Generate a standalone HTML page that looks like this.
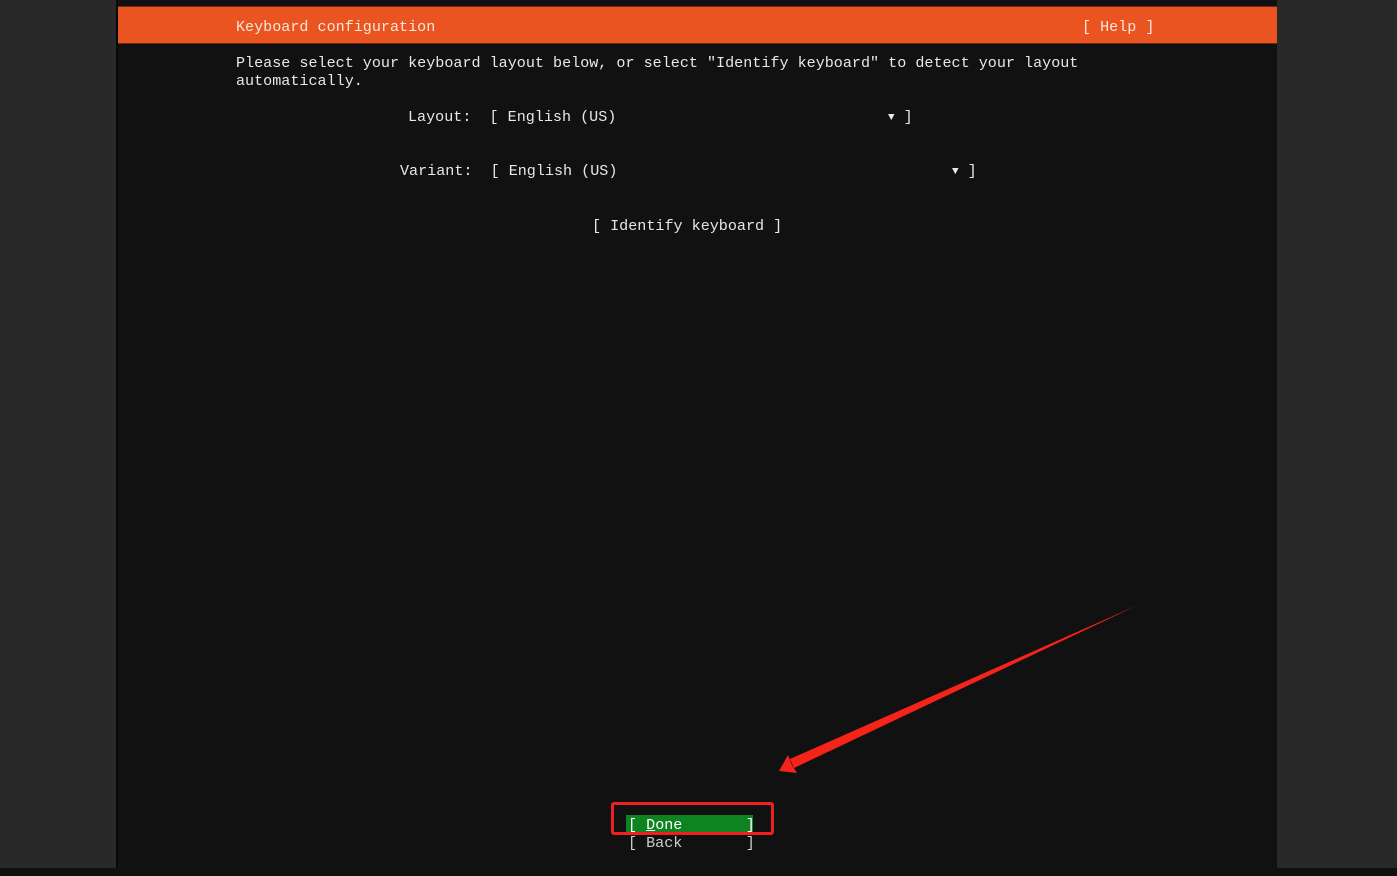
<!DOCTYPE html>
<html><head><style>
body{margin:0;width:1397px;height:876px;background:#111;position:relative;overflow:hidden;font-family:"Liberation Mono","DejaVu Sans Mono",monospace;font-size:15.1px;color:#e8e8e8}
.t{position:absolute;white-space:pre;line-height:18px}
.a{font-size:11px;vertical-align:1px}
</style></head><body>
<div style="position:absolute;left:0;top:0;width:116px;height:868px;background:#292929"></div>
<div style="position:absolute;left:116px;top:0;width:2px;height:868px;background:#080808"></div>
<div style="position:absolute;left:1277px;top:0;width:120px;height:868px;background:#292929"></div>
<div style="position:absolute;left:0;top:868px;width:1397px;height:8px;background:#111"></div>
<div style="position:absolute;left:118px;top:6px;width:1159px;height:38px;background:#e95420;border-top:1px solid #6a2a14;border-bottom:1px solid #6a2a14;box-sizing:border-box"></div>
<div class="t" style="left:236px;top:18px;color:#fbe6dc">Keyboard configuration</div>
<div class="t" style="left:1082px;top:18px;color:#fbe6dc">[ Help ]</div>
<div class="t" style="left:236px;top:54px">Please select your keyboard layout below, or select "Identify keyboard" to detect your layout
automatically.</div>
<div class="t" style="left:408px;top:108px">Layout:  [ English (US)</div>
<div class="t" style="left:888px;top:108px"><span class="a">▼</span> ]</div>
<div class="t" style="left:400px;top:162px">Variant:  [ English (US)</div>
<div class="t" style="left:952px;top:162px"><span class="a">▼</span> ]</div>
<div class="t" style="left:592px;top:217px">[ Identify keyboard ]</div>
<div style="position:absolute;left:626px;top:815px;width:127px;height:18px;background:#0e8420"></div>
<div class="t" style="left:628px;top:816px;color:#fff">[ <u>D</u>one       ]</div>
<div class="t" style="left:628px;top:834px;color:#ccc">[ Back       ]</div>
<div style="position:absolute;left:611px;top:802px;width:157px;height:27px;border:3px solid #f02020;border-radius:3px"></div>
<svg style="position:absolute;left:0;top:0" width="1397" height="876">
<polygon points="1138,605 794,768 790,759" fill="#f5231a"/>
<polygon points="779,771 788,755 792,765 797,773" fill="#f5231a"/>
</svg>
</body></html>
